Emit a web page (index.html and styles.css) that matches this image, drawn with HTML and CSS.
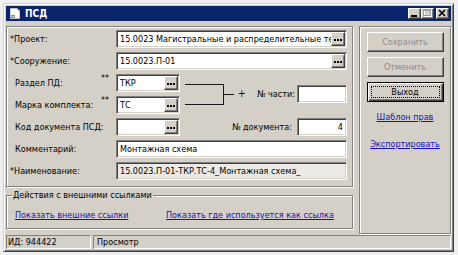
FILE: index.html
```html
<!DOCTYPE html>
<html lang="ru">
<head>
<meta charset="utf-8">
<title>ПСД</title>
<link rel="stylesheet" href="styles.css">
</head>
<body>
<div class="window">
  <div class="titlebar">
    <svg class="app-icon" width="10" height="11" viewBox="0 0 10 11">
      <path d="M0.5 0.5 H7 L9.5 3 V10.5 H0.5 Z" fill="#fff" stroke="#c8c8c8"/>
      <rect x="1" y="7" width="4" height="3" fill="#8090b0"/>
      <rect x="2" y="8" width="2" height="1" fill="#d0d8e8"/>
    </svg>
    <span class="title">ПСД</span>
    <div class="caption-btns">
      <span class="cbtn"><svg width="11" height="9" viewBox="0 0 11 9"><rect x="2" y="6" width="6" height="2" fill="#000"/></svg></span>
      <span class="cbtn"><svg width="11" height="9" viewBox="0 0 11 9"><rect x="2.5" y="1.5" width="7" height="6" fill="none" stroke="#fff"/><rect x="1.5" y="0.5" width="7" height="6" fill="none" stroke="#a0a0a0"/><rect x="1.5" y="1" width="7" height="1" fill="#a0a0a0"/></svg></span>
      <span class="cbtn close"><svg width="11" height="9" viewBox="0 0 11 9"><path d="M2 1 L8 7 M8 1 L2 7" stroke="#000" stroke-width="1.6"/></svg></span>
    </div>
  </div>

  <div class="client">
    <div class="left">
      <div class="group main-group">
        <div class="form-grid">
          <div class="lbl span2">*Проект:</div>
          <div class="field wide"><span class="val">15.0023 Магистральные и распределительные те</span><span class="dots"><svg width="8" height="2" viewBox="0 0 8 2"><rect x="0" width="2" height="2"/><rect x="3" width="2" height="2"/><rect x="6" width="2" height="2"/></svg></span></div>

          <div class="lbl span2">*Сооружение:</div>
          <div class="field wide"><span class="val">15.0023.П-01</span><span class="dots"><svg width="8" height="2" viewBox="0 0 8 2"><rect x="0" width="2" height="2"/><rect x="3" width="2" height="2"/><rect x="6" width="2" height="2"/></svg></span></div>

          <div class="lbl ind">Раздел ПД:</div>
          <div class="stars">**</div>
          <div class="field"><span class="val">ТКР</span><span class="dots"><svg width="8" height="2" viewBox="0 0 8 2"><rect x="0" width="2" height="2"/><rect x="3" width="2" height="2"/><rect x="6" width="2" height="2"/></svg></span></div>
          <div class="joiner">
            <svg class="bracket" width="56" height="40" viewBox="0 0 56 40">
              <path d="M5 10.5 H44 M5 30.5 H44 M43.5 10 V31 M44 20.5 H54" stroke="#1a1a1a" fill="none" shape-rendering="crispEdges"/>
            </svg>
            <span class="plus">+</span>
            <span class="part-lbl">№ части:</span>
          </div>
          <div class="field part"><span class="val"></span></div>

          <div class="lbl ind">Марка комплекта:</div>
          <div class="stars">**</div>
          <div class="field"><span class="val">ТС</span><span class="dots"><svg width="8" height="2" viewBox="0 0 8 2"><rect x="0" width="2" height="2"/><rect x="3" width="2" height="2"/><rect x="6" width="2" height="2"/></svg></span></div>

          <div class="lbl ind span2">Код документа ПСД:</div>
          <div class="field"><span class="val"></span><span class="dots"><svg width="8" height="2" viewBox="0 0 8 2"><rect x="0" width="2" height="2"/><rect x="3" width="2" height="2"/><rect x="6" width="2" height="2"/></svg></span></div>
          <div class="doc-lbl">№ документа:</div>
          <div class="field"><span class="val num">4</span></div>

          <div class="lbl ind span2">Комментарий:</div>
          <div class="field wide"><span class="val">Монтажная схема</span></div>

          <div class="lbl span2">*Наименование:</div>
          <div class="field wide readonly"><span class="val">15.0023.П-01-ТКР.ТС-4_Монтажная схема_</span></div>
        </div>
      </div>

      <div class="group actions">
        <span class="legend">Действия с внешними ссылками</span>
        <div class="links">
          <a href="#">Показать внешние ссылки</a>
          <a href="#">Показать где используется как ссылка</a>
        </div>
      </div>
    </div>

    <div class="group panel">
      <button class="btn disabled" type="button">Сохранить</button>
      <button class="btn disabled" type="button">Отменить</button>
      <button class="btn default" type="button"><span class="focus">Выход</span></button>
      <a class="plink first" href="#">Шаблон прав</a>
      <a class="plink" href="#">Экспортировать</a>
    </div>
  </div>

  <div class="statusbar">
    <div class="cell id">ИД: 944422</div>
    <div class="cell mode">Просмотр</div>
  </div>
</div>
</body>
</html>
```

FILE: styles.css
```css
html, body {
  margin: 0;
  padding: 0;
}
body {
  background: #efefef;
  font-family: "DejaVu Sans Condensed", "Liberation Sans", sans-serif;
  font-size: 9px;
  line-height: 12px;
  color: #000;
  padding: 3px 0 0 3px;
}
.window {
  width: 451px;
  height: 249px;
  box-sizing: border-box;
  background: #d4d0c8;
  border: 1px solid;
  border-color: #d4d0c8 #404040 #404040 #d4d0c8;
  box-shadow: inset 1px 1px 0 #fff, inset -1px -1px 0 #808080;
  padding: 2px;
  display: flex;
  flex-direction: column;
}
.titlebar {
  height: 15px;
  flex: none;
  background: #0a246a;
  display: flex;
  align-items: center;
  padding-left: 4px;
}
.app-icon {
  flex: none;
  display: block;
}
.title {
  color: #fff;
  font-weight: bold;
  font-size: 10px;
  margin-left: 5px;
}
.caption-btns {
  margin-left: auto;
  margin-right: 2px;
  display: flex;
}
.cbtn {
  width: 13px;
  height: 11px;
  box-sizing: border-box;
  background: #d4d0c8;
  border: 1px solid;
  border-color: #fff #404040 #404040 #fff;
  box-shadow: inset -1px -1px 0 #808080;
  display: flex;
  align-items: center;
  justify-content: center;
}
.cbtn svg { display: block; }
.cbtn.close { margin-left: 2px; }

.client {
  height: 213px;
  flex: none;
  box-sizing: border-box;
  padding-top: 5px;
  display: flex;
  gap: 6px;
}
.left {
  width: 347px;
  flex: none;
  display: flex;
  flex-direction: column;
}
.group {
  box-sizing: border-box;
  border: 1px solid #808080;
  box-shadow: inset 1px 1px 0 #fff, 1px 1px 0 #fff;
}
.main-group {
  height: 161px;
  padding: 3px 0 0 0;
}
.form-grid {
  display: grid;
  grid-template-columns: 93px 16px 64px 117px 50px;
  grid-template-rows: repeat(7, 18px);
  row-gap: 4px;
}
.lbl {
  display: flex;
  align-items: center;
  padding-left: 3px;
  white-space: nowrap;
}
.lbl.ind { padding-left: 8px; }
.span2 { grid-column: span 2; }
.stars {
  padding-left: 1px;
  line-height: 9px;
  font-size: 9px;
}
.field {
  height: 18px;
  box-sizing: border-box;
  display: flex;
  align-items: center;
  border: 1px solid;
  border-color: #808080 #fff #fff #808080;
  box-shadow: inset 1px 1px 0 #404040, inset -1px -1px 0 #d4d0c8;
  background: #fff;
  padding: 1px;
}
.field.wide { grid-column: 3 / 6; }
.field.readonly { background: #eceae6; }
.field.part {
  grid-column: 5;
  grid-row: 3 / 5;
  align-self: center;
}
.val {
  flex: 1;
  min-width: 0;
  white-space: nowrap;
  padding-left: 2px;
  line-height: 14px;
}
.val.num {
  text-align: right;
  padding-right: 2px;
}
.dots {
  flex: none;
  width: 14px;
  height: 14px;
  box-sizing: border-box;
  background: #d4d0c8;
  border: 1px solid;
  border-color: #fff #404040 #404040 #fff;
  box-shadow: inset -1px -1px 0 #808080;
  display: flex;
  align-items: center;
  justify-content: center;
}
.dots svg { display: block; fill: #000; margin-top: 2px; }
.joiner {
  grid-column: 4;
  grid-row: 3 / 5;
  display: flex;
  align-items: center;
}
.bracket { display: block; flex: none; }
.plus {
  margin-left: 2px;
  font-size: 10px;
}
.part-lbl {
  margin-left: auto;
  padding-right: 2px;
  white-space: nowrap;
}
.doc-lbl {
  display: flex;
  align-items: center;
  justify-content: flex-end;
  padding-right: 5px;
  white-space: nowrap;
}

.actions {
  margin-top: 8px;
  height: 34px;
  position: relative;
  padding: 13px 0 0 8px;
}
.legend {
  position: absolute;
  top: -7px;
  left: 5px;
  padding: 0 1px;
  background: #d4d0c8;
  line-height: 12px;
}
.links {
  display: grid;
  grid-template-columns: 151px auto;
}
a {
  color: #1212b8;
  text-decoration: underline;
}

.panel {
  width: 92px;
  flex: none;
  display: flex;
  flex-direction: column;
  align-items: center;
  padding-top: 5px;
}
.btn {
  appearance: none;
  margin: 0 0 5px 0;
  padding: 0;
  font: inherit;
  width: 77px;
  height: 20px;
  box-sizing: border-box;
  background: #d4d0c8;
  border: 1px solid;
  border-color: #fff #404040 #404040 #fff;
  box-shadow: inset -1px -1px 0 #808080;
  display: flex;
  align-items: center;
  justify-content: center;
  color: #000;
}
.btn.disabled {
  color: #8c8c8c;
}
.btn.default {
  border-color: #000;
  box-shadow: inset 1px 1px 0 #fff, inset -1px -1px 0 #404040, inset -2px -2px 0 #808080;
  padding: 3px;
}
.focus {
  flex: 1;
  align-self: stretch;
  border: 1px dotted #000;
  display: flex;
  align-items: center;
  justify-content: center;
}
.plink { line-height: 12px; margin-top: 15px; }
.plink.first { margin-top: 4px; }

.statusbar {
  margin-top: 1px;
  height: 14px;
  flex: none;
  display: flex;
  gap: 2px;
}
.cell {
  box-sizing: border-box;
  border: 1px solid;
  border-color: #808080 #fff #fff #808080;
  padding-left: 1px;
  line-height: 12px;
  white-space: nowrap;
}
.cell.id { width: 85px; }
.cell.mode { flex: 1; padding-left: 3px; }
```
